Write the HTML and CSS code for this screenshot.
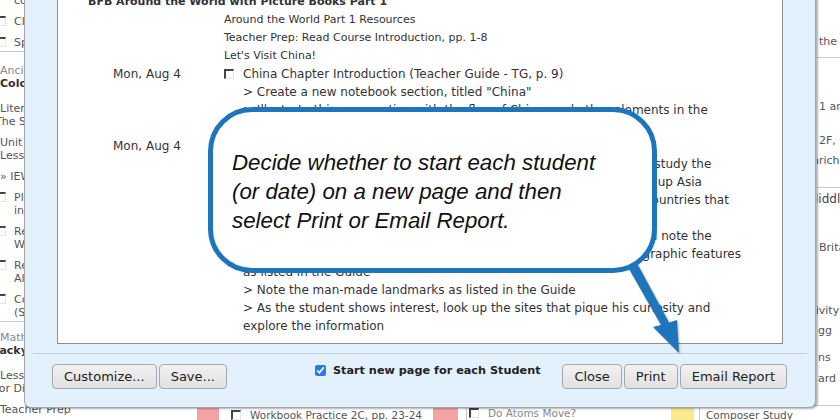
FILE: index.html
```html
<!DOCTYPE html>
<html lang="en">
<head>
  <meta charset="UTF-8">
  <meta name="viewport" content="width=device-width, initial-scale=1.0">
  <title>Print Schedule Report</title>
  <link rel="stylesheet" href="styles.css">
</head>
<body>
  <div class="page">
    <aside class="side-left">
      <div class="block">
        <div class="ln indent">complete the page</div>
        <div class="item"><div class="ln"><span class="cb"></span>Class discussion</div></div>
        <div class="item"><div class="ln"><span class="cb"></span>Spelling</div></div>
      </div>
      <div class="block">
        <div class="item head">
          <div class="ln muted">Ancient History</div>
          <div class="ln strong">Colonial Times</div>
        </div>
        <div class="item head">
          <div class="ln">Literature</div>
          <div class="ln cut">The Secret Garden</div>
        </div>
        <div class="item">
          <div class="ln">Unit 2</div>
          <div class="ln">Lesson 6</div>
        </div>
        <div class="item"><div class="ln">&raquo; IEW Writing</div></div>
        <div class="item">
          <div class="ln"><span class="cb"></span>Plan the outline</div>
          <div class="ln indent">in the notebook</div>
        </div>
        <div class="item">
          <div class="ln"><span class="cb"></span>Read the source</div>
          <div class="ln indent">With the student</div>
        </div>
        <div class="item">
          <div class="ln"><span class="cb"></span>Review the lesson</div>
          <div class="ln indent">Aloud</div>
        </div>
        <div class="item">
          <div class="ln"><span class="cb"></span>Complete the outline</div>
          <div class="ln indent">(Student Book)</div>
        </div>
      </div>
      <div class="block open">
        <div class="item head">
          <div class="ln muted">Math</div>
          <div class="ln strong cut-wide">Backyard Math</div>
        </div>
        <div class="item head">
          <div class="ln">Lesson 12</div>
          <div class="ln cut">for Discussion</div>
        </div>
        <div class="item"><div class="ln">Teacher Prep</div></div>
      </div>
    </aside>

    <main class="center">
      <div class="filler"></div>
      <div class="day-row">
        <span class="mark pink"></span>
        <div class="day-cell first"><span class="cb"></span>Workbook Practice 2C, pp. 23-24</div>
        <span class="mark pink wide"></span>
        <div class="day-cell lined muted"><span class="cb"></span>Do Atoms Move?</div>
        <span class="mark yellow"></span>
        <div class="day-cell lined last">Composer Study</div>
      </div>
    </main>

    <aside class="side-right">
      <div class="r-cell r-one">
        <div class="ln">the first</div>
      </div>
      <div class="r-cell r-two">
        <div class="ln gap-a">1 and 2</div>
        <div class="ln gap-b">2F, pp. 4</div>
        <div class="ln gap-c cut-md">Enrichment</div>
      </div>
      <div class="r-cell r-three">
        <div class="ln title gap-d cut-sm">Middle Ages</div>
        <div class="ln gap-e">Britain</div>
        <div class="ln gap-f cut-lg">Activity</div>
        <div class="ln gap-c cut-xs">gg</div>
        <div class="ln gap-g cut-xs">ns</div>
        <div class="ln gap-h cut-xs">ard</div>
      </div>
    </aside>
  </div>

  <div class="dialog">
    <div class="report">
      <h2 class="course">BFB Around the World with Picture Books Part 1</h2>
      <div class="entry">
        <div class="date"></div>
        <div class="notes">
          <div>Around the World Part 1 Resources</div>
          <div>Teacher Prep: Read Course Introduction, pp. 1-8</div>
          <div>Let's Visit China!</div>
        </div>
      </div>
      <div class="entry">
        <div class="date">Mon, Aug 4</div>
        <div class="task">
          <div class="task-title"><span class="cb"></span>China Chapter Introduction (Teacher Guide - TG, p. 9)</div>
          <div class="step">&gt; Create a new notebook section, titled "China"</div>
          <div class="step">&gt; Illustrate this new section with the flag of China, and other elements in the<br>Guide</div>
        </div>
      </div>
      <div class="entry">
        <div class="date">Mon, Aug 4</div>
        <div class="task">
          <div class="task-title"><span class="cb"></span>Map of China (TG, p. 10)</div>
          <div class="step">&gt; Using the map in the Student Notebook, have the student closely study the<br>countries, oceans, deserts and mountain ranges that together make up Asia</div>
          <div class="step">&gt; Locate China on the Asia map, then color it in and find all of the countries that<br>border China</div>
          <div class="step">&gt; Using the map of China in the Notebook, help the student find and note the<br>major rivers, lakes, mountains, plateaus, deserts and all other geographic features<br>as listed in the Guide</div>
          <div class="step">&gt; Note the man-made landmarks as listed in the Guide</div>
          <div class="step">&gt; As the student shows interest, look up the sites that pique his curiosity and<br>explore the information</div>
        </div>
      </div>
    </div>

    <div class="actions">
      <div class="btn-group">
        <button class="btn">Customize...</button>
        <button class="btn">Save...</button>
      </div>
      <label class="print-opt">
        <input type="checkbox" checked>
        Start new page for each Student
      </label>
      <div class="btn-group end">
        <button class="btn">Close</button>
        <button class="btn">Print</button>
        <button class="btn">Email Report</button>
      </div>
    </div>
  </div>

  <svg class="pointer" viewBox="0 0 70 100" width="70" height="100">
    <polygon points="9,9 18,5 49,62.5 57,60 59,93 33,67 41,65" fill="#1d76bb"/>
  </svg>

  <div class="callout">
    Decide whether to start each student<br>
    (or date) on a new page and then<br>
    select Print or Email Report.
  </div>
</body>
</html>
```

FILE: styles.css
```css
* {
  box-sizing: border-box;
}
body {
  margin: 0;
  width: 840px;
  height: 420px;
  overflow: hidden;
  position: relative;
  font-family: "DejaVu Sans", Verdana, sans-serif;
  color: #555;
  background: #fff;
}

/* page behind the dialog */
.page {
  display: grid;
  grid-template-columns: 197px 620px 23px;
  height: 420px;
  font-size: 11px;
}
.page > * {
  min-width: 0;
  overflow: hidden;
}
.ln {
  height: 13px;
  line-height: 13px;
  white-space: nowrap;
}
.cb {
  display: inline-block;
  width: 10px;
  height: 10px;
  border-top: 2px solid #444;
  border-left: 2px solid #444;
  border-right: 1px solid #e4e4e4;
  border-bottom: 1px solid #e4e4e4;
  margin-right: 9px;
  vertical-align: -1px;
}
.side-left {
  margin-top: -6px;
}
.side-left .block {
  border-bottom: 1px solid #c8c8c8;
  padding-bottom: 2px;
}
.side-left .block.open {
  border-bottom: none;
}
.side-left .item {
  margin-top: 8px;
}
.side-left .item.head {
  margin-top: 12px;
}
.side-left .block.open .item.head:first-child {
  margin-top: 9px;
}
.side-left .cb {
  margin-left: -4px;
  margin-right: 8px;
}
.indent {
  padding-left: 14px;
}
.muted {
  color: #888;
}
.strong {
  font-weight: bold;
  color: #333;
}
.cut {
  text-indent: -5px;
}
.cut-wide {
  text-indent: -9px;
}

.center {
  display: flex;
  flex-direction: column;
}
.filler {
  flex: 1;
}
.day-row {
  display: flex;
  height: 15px;
  border-top: 1px solid #ccc;
  font-size: 10.5px;
  line-height: 14px;
}
.mark {
  flex-shrink: 0;
  width: 22px;
}
.mark.wide {
  width: 25px;
}
.pink {
  background: #f3a3a3;
}
.yellow {
  width: 23px;
  background: #fbe98e;
}
.day-cell {
  flex-shrink: 0;
  padding-top: 2px;
  white-space: nowrap;
  overflow: hidden;
}
.day-cell.first {
  width: 214px;
  padding-left: 12px;
}
.day-cell.lined {
  border-left: 1px solid #c8c8c8;
  margin-left: 8px;
  width: 205px;
  padding-left: 2px;
  padding-top: 0;
}
.day-cell.last {
  flex: 1;
  margin-left: 5px;
  padding-left: 6px;
  padding-top: 2px;
}

.r-cell {
  display: flow-root;
  border-bottom: 1px solid #c8c8c8;
  padding-left: 2px;
}
.r-one {
  height: 58px;
  padding-top: 35px;
}
.r-two {
  height: 130px;
}
.r-three {
  height: 218px;
}
.gap-a { margin-top: 42px; }
.gap-b { margin-top: 21px; }
.gap-c { margin-top: 7px; }
.gap-d { margin-top: 5px; }
.gap-e { margin-top: 35px; }
.gap-f { margin-top: 50px; }
.gap-g { margin-top: 14px; }
.gap-h { margin-top: 8px; }
.title {
  font-size: 12px;
  color: #444;
}
.cut-xs { text-indent: -1px; }
.cut-sm { text-indent: -11px; }
.cut-md { text-indent: -14px; }
.cut-lg { text-indent: -21px; }

/* report dialog */
.dialog {
  position: absolute;
  left: 24px;
  top: -40px;
  width: 792px;
  height: 448px;
  display: flex;
  flex-direction: column;
  background: #e2f1fc;
  border: 1px solid #a2a6aa;
  border-radius: 7px;
  box-shadow: 2px 1px 2px rgba(0, 0, 0, 0.3);
  z-index: 2;
}
.report {
  flex: 1;
  margin: 0 32px;
  padding-top: 31px;
  background: #fff;
  border: 1px solid #8e8e8e;
  overflow: hidden;
  color: #333;
  font-size: 12px;
  line-height: 18px;
}
.course {
  margin: 0;
  padding-left: 30px;
  font-size: 11px;
  line-height: 18px;
  font-weight: bold;
}
.entry {
  display: grid;
  grid-template-columns: 166px 1fr;
}
.date {
  padding-left: 55px;
  white-space: nowrap;
}
.notes {
  font-size: 11px;
}
.task-title,
.step {
  white-space: nowrap;
}
.step {
  padding-left: 19px;
}

.actions {
  display: flex;
  align-items: flex-start;
  margin: 9px 8px 0;
  padding: 10px 20px 18px 19px;
  border-top: 1px solid #c4ced5;
}
.btn-group {
  display: flex;
  gap: 2px;
}
.btn-group.end {
  margin-left: auto;
}
.btn {
  height: 25px;
  padding: 0 11px;
  font-family: "DejaVu Sans", Verdana, sans-serif;
  font-size: 13px;
  color: #222;
  background: linear-gradient(#f1f1f1, #e1e1e1);
  border: 1px solid #a8a8a8;
  border-radius: 4px;
}
.print-opt {
  display: flex;
  align-items: center;
  gap: 7px;
  margin-left: 88px;
  font-size: 11.25px;
  line-height: 13px;
  font-weight: bold;
  color: #222;
}
.print-opt input {
  width: 11px;
  height: 11px;
  margin: 0;
  accent-color: #2a7be0;
}

/* tutorial overlay */
.pointer {
  position: absolute;
  left: 620px;
  top: 260px;
  z-index: 3;
  filter: drop-shadow(1px 1px 1px rgba(0, 0, 0, 0.3));
}
.callout {
  position: absolute;
  left: 208px;
  top: 107px;
  width: 449px;
  height: 166px;
  padding: 36px 0 0 19px;
  background: #fff;
  border: 5px solid #1d76bb;
  border-radius: 44px;
  font-family: "Liberation Sans", Arial, sans-serif;
  font-style: italic;
  font-size: 22.3px;
  line-height: 29px;
  color: #111;
  white-space: nowrap;
  z-index: 4;
}
```
